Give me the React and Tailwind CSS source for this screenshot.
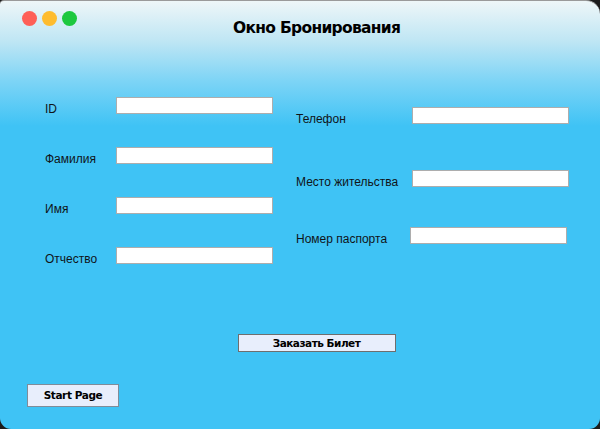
import React from "react";

const leftFields = ["ID", "Фамилия", "Имя", "Отчество"];

const rightFields = [
  { label: "Телефон", top: "mt-[107px]", inputX: "ml-[116px]" },
  { label: "Место жительства", top: "mt-[46px]", inputX: "ml-[116px]" },
  { label: "Номер паспорта", top: "mt-[40px]", inputX: "ml-[114px]" },
];

const Field = ({ label, className = "", inputClass = "ml-[71px]" }) => (
  <div className={`flex items-center h-[17px] ${className}`}>
    <span className="w-0 whitespace-nowrap mt-[6px] text-[12px] text-[#101418]">{label}</span>
    <input
      type="text"
      className={`${inputClass} w-[157px] h-[17px] bg-white border border-[#adadad] outline-none`}
    />
  </div>
);

const App = () => {
  return (
    <div className="w-[600px] h-[429px] bg-[#1c1c1c] font-['Liberation_Sans',Arial,sans-serif]">
      <div className="relative w-full h-full flex flex-col overflow-hidden rounded-tl-[4px] rounded-tr-[14px] rounded-b-[11px] border-t border-[#9a9a9a] bg-[linear-gradient(to_bottom,#eef6f8_0px,#bfe6f4_40px,#7dd4f6_80px,#3fc3f5_125px,#3fc3f5_100%)]">
        {/* title bar */}
        <div className="flex items-start h-[36px] pl-[22px] pt-[10px]">
          <div className="flex gap-[5px]">
            <span className="w-[15px] h-[15px] rounded-full bg-[#fe5f57]" />
            <span className="w-[15px] h-[15px] rounded-full bg-[#febc2e]" />
            <span className="w-[15px] h-[15px] rounded-full bg-[#1dc83f]" />
          </div>
          <h1 className="ml-[156px] mt-[7px] text-[15.5px] leading-[20px] font-bold text-black font-['DejaVu_Sans',Tahoma,sans-serif] tracking-[-0.7px]">
            Окно Бронирования
          </h1>
        </div>

        <div className="flex">
          {/* left column */}
          <div className="flex flex-col gap-[33px] ml-[45px] mt-[60px]">
            {leftFields.map((f) => (
              <Field key={f} label={f} />
            ))}
          </div>

          {/* right column */}
          <div className="flex flex-col ml-[23px] -mt-[37px]">
            {rightFields.map((f) => (
              <Field key={f.label} label={f.label} className={f.top} inputClass={f.inputX} />
            ))}
          </div>
        </div>

        <div className="flex justify-center pl-[33px] mt-[70px]">
          <button className="w-[158px] h-[18px] bg-[#e8eefc] border border-[#6e6e6e] text-[10.5px] font-bold text-black font-['DejaVu_Sans',Tahoma,sans-serif] tracking-[-0.5px] leading-none">
            Заказать Билет
          </button>
        </div>

        <div className="ml-[27px] mt-[30px]">
          <button className="w-[92px] h-[23px] bg-[#e8eefc] border border-[#808c99] text-[10.5px] font-bold text-black font-['DejaVu_Sans',Tahoma,sans-serif] tracking-[-0.4px] leading-none">
            Start Page
          </button>
        </div>
      </div>
    </div>
  );
};

export default App;
